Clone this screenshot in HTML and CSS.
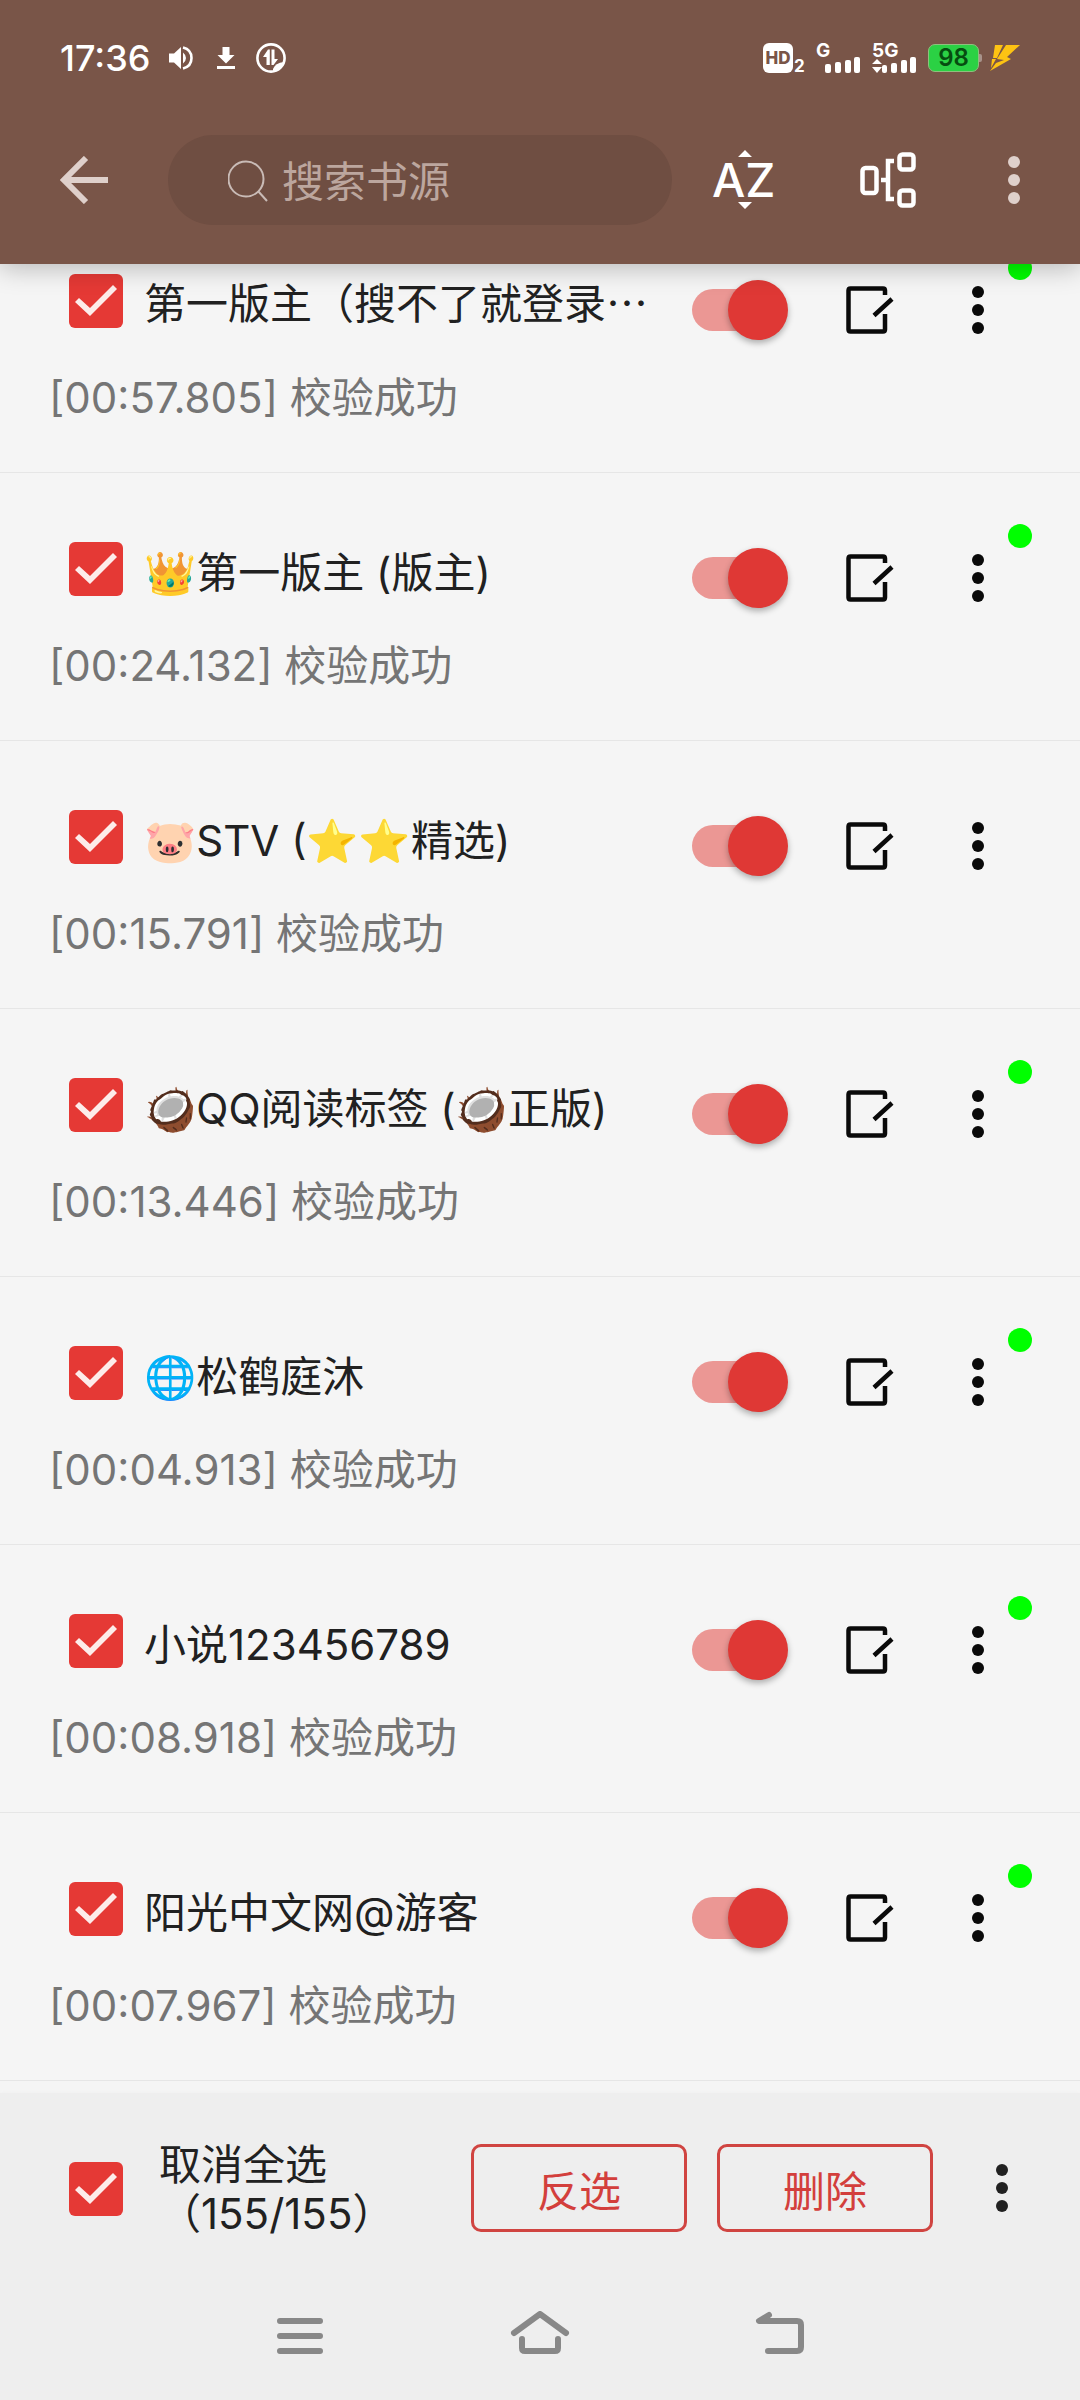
FILE: index.html
```html
<!DOCTYPE html>
<html lang="zh-CN">
<head>
<meta charset="utf-8">
<meta name="viewport" content="width=device-width, initial-scale=1">
<title>书源管理</title>
<link rel="stylesheet" href="styles.css">
</head>
<body>
<svg class="sprite" aria-hidden="true">
  <symbol id="dots" viewBox="0 0 48 48"><circle cx="24" cy="6" r="6"/><circle cx="24" cy="24" r="6"/><circle cx="24" cy="42" r="6"/></symbol>
  <symbol id="edit" viewBox="0 0 48 48"><path d="M39 9V4.500Q39 2.500 37 2.500H4.500Q2.500 2.500 2.500 4.500V43.500Q2.500 45.500 4.500 45.500H37Q39 45.500 39 43.500V28M28 29.500L46 13" fill="none" stroke="currentColor" stroke-width="4.500"/></symbol>
</svg>

<header class="top">
  <div class="status">
    <div class="status-group">
      <span class="clock">17:36</span>
      <svg class="sound" viewBox="0 0 24 24"><path d="M0 7.500H5L12 1V23L5 16.500H0ZM14 6.500Q17 9 17 12T14 17.500Z" fill="#fff"/><path d="M14 1.500C20 3 22.500 7.500 22.500 12S20 21 14 22.500" fill="none" stroke="#fff" stroke-width="2.600"/></svg>
      <svg class="download" viewBox="0 0 18 22"><path d="M5.500 0H12.500V8H17.500L9 16.500L.5 8H5.500ZM0 19H18V22H0Z" fill="#fff"/></svg>
      <svg class="data" viewBox="0 0 30 30"><circle cx="15" cy="15" r="13.600" fill="none" stroke="#fff" stroke-width="2.600"/><path d="M7 14L12 6.500H13.800V22H10.500V14ZM15.500 6.500H18.500V16H22L17.500 22H15.500Z" fill="#fff"/><path d="M17 26Q19 20 28 19Q26 27 17 28Z" fill="#fff"/></svg>
    </div>
    <div class="status-group status-right">
      <svg class="hd" viewBox="0 0 42 40"><rect y="5" width="30" height="30" rx="6" fill="#fff"/><text x="15" y="26" text-anchor="middle" font-size="17" font-weight="800" fill="#795548">HD</text><text x="31" y="34" font-size="17" font-weight="700" fill="#fff">2</text></svg>
      <svg class="signal" viewBox="0 0 45 40" fill="#fff"><text x="0" y="19" font-size="19" font-weight="700">G</text><rect x="9" y="26" width="6" height="9" rx="2"/><rect x="19" y="24" width="6" height="11" rx="2"/><rect x="29" y="22" width="6" height="13" rx="2"/><rect x="38" y="19" width="6" height="16" rx="2"/></svg>
      <svg class="signal" viewBox="0 0 45 40" fill="#fff"><text x="0" y="19" font-size="19" font-weight="700">5G</text><path d="M0 26L5 21L10 26ZM0 29H10L5 35Z"/><rect x="10" y="27" width="5" height="8" rx="2"/><rect x="19" y="25" width="6" height="10" rx="2"/><rect x="29" y="22" width="6" height="13" rx="2"/><rect x="38" y="19" width="6" height="16" rx="2"/></svg>
      <span class="battery">98</span>
      <svg class="bolt" viewBox="0 0 30 26" fill="#fdc313"><path d="M5 0H13L7 13H3ZM16 0H30L17 12L21 14L0 26L6 18L14 15L7 14ZM2 14H6L1 23Z"/></svg>
    </div>
  </div>
  <div class="toolbar">
    <button class="tool back" aria-label="返回"><svg viewBox="0 0 48 48"><path d="M26 2L4 24L26 46M4 24H48" fill="none" stroke="#dfd0cb" stroke-width="6"/></svg></button>
    <label class="search">
      <svg viewBox="0 0 40 42"><circle cx="18" cy="19" r="17.500" fill="none" stroke="#c9bbb6" stroke-width="2"/><path d="M30 31L39 41" stroke="#c9bbb6" stroke-width="2"/></svg>
      <input type="search" placeholder="搜索书源" aria-label="搜索书源">
    </label>
    <button class="tool sort" aria-label="排序"><svg viewBox="0 0 64 60" fill="#fff"><path d="M26 7L33 0L40 7ZM26 52H40L33 59Z"/><text x="0" y="47" font-size="47" font-weight="500">AZ</text></svg></button>
    <button class="tool group" aria-label="分组"><svg viewBox="0 0 56 56" fill="none" stroke="#fff" stroke-width="4.500"><rect x="2.500" y="16" width="14" height="25" rx="3"/><rect x="39.500" y="2.500" width="14" height="15" rx="3"/><rect x="39.500" y="38.500" width="14" height="15" rx="3"/><path d="M34 9H28V47H34M21 28H28"/></svg></button>
    <button class="tool more" aria-label="更多"><svg><use href="#dots"/></svg></button>
  </div>
</header>

<main class="list">
  <ul class="sources">
    <li class="source">
      <div class="info"><label class="name"><input class="check" type="checkbox" checked><span class="cjk">第一版主（搜不了就登录…</span></label><p class="result">[00:57.805] 校验成功</p></div>
      <div class="actions"><input class="switch" type="checkbox" role="switch" aria-label="启用" checked><button class="icon" aria-label="编辑"><svg><use href="#edit"/></svg></button><button class="icon" aria-label="更多"><svg><use href="#dots"/></svg></button></div>
      <span class="online"></span>
    </li>
    <li class="source">
      <div class="info"><label class="name"><input class="check" type="checkbox" checked><span>👑第一版主 (版主)</span></label><p class="result">[00:24.132] 校验成功</p></div>
      <div class="actions"><input class="switch" type="checkbox" role="switch" aria-label="启用" checked><button class="icon" aria-label="编辑"><svg><use href="#edit"/></svg></button><button class="icon" aria-label="更多"><svg><use href="#dots"/></svg></button></div>
      <span class="online"></span>
    </li>
    <li class="source">
      <div class="info"><label class="name"><input class="check" type="checkbox" checked><span>🐷STV (⭐⭐精选)</span></label><p class="result">[00:15.791] 校验成功</p></div>
      <div class="actions"><input class="switch" type="checkbox" role="switch" aria-label="启用" checked><button class="icon" aria-label="编辑"><svg><use href="#edit"/></svg></button><button class="icon" aria-label="更多"><svg><use href="#dots"/></svg></button></div>
    </li>
    <li class="source">
      <div class="info"><label class="name"><input class="check" type="checkbox" checked><span>🥥QQ阅读标签 (🥥正版)</span></label><p class="result">[00:13.446] 校验成功</p></div>
      <div class="actions"><input class="switch" type="checkbox" role="switch" aria-label="启用" checked><button class="icon" aria-label="编辑"><svg><use href="#edit"/></svg></button><button class="icon" aria-label="更多"><svg><use href="#dots"/></svg></button></div>
      <span class="online"></span>
    </li>
    <li class="source">
      <div class="info"><label class="name"><input class="check" type="checkbox" checked><span>🌐松鹤庭沐</span></label><p class="result">[00:04.913] 校验成功</p></div>
      <div class="actions"><input class="switch" type="checkbox" role="switch" aria-label="启用" checked><button class="icon" aria-label="编辑"><svg><use href="#edit"/></svg></button><button class="icon" aria-label="更多"><svg><use href="#dots"/></svg></button></div>
      <span class="online"></span>
    </li>
    <li class="source">
      <div class="info"><label class="name"><input class="check" type="checkbox" checked><span>小说123456789</span></label><p class="result">[00:08.918] 校验成功</p></div>
      <div class="actions"><input class="switch" type="checkbox" role="switch" aria-label="启用" checked><button class="icon" aria-label="编辑"><svg><use href="#edit"/></svg></button><button class="icon" aria-label="更多"><svg><use href="#dots"/></svg></button></div>
      <span class="online"></span>
    </li>
    <li class="source">
      <div class="info"><label class="name"><input class="check" type="checkbox" checked><span>阳光中文网@游客</span></label><p class="result">[00:07.967] 校验成功</p></div>
      <div class="actions"><input class="switch" type="checkbox" role="switch" aria-label="启用" checked><button class="icon" aria-label="编辑"><svg><use href="#edit"/></svg></button><button class="icon" aria-label="更多"><svg><use href="#dots"/></svg></button></div>
      <span class="online"></span>
    </li>
  </ul>
</main>

<footer class="bottom">
  <div class="selection">
    <label class="all"><input class="check" type="checkbox" checked><span>取消全选<br>（155/155）</span></label>
    <button class="outlined">反选</button>
    <button class="outlined">删除</button>
    <button class="icon dark" aria-label="更多"><svg><use href="#dots"/></svg></button>
  </div>
  <nav class="system">
    <button class="icon" aria-label="最近任务"><svg viewBox="0 0 60 48"><path d="M10 10H50M10 25H50M10 40H50"/></svg></button>
    <button class="icon" aria-label="主屏幕"><svg viewBox="0 0 60 48"><path d="M4 22L30 3L56 22M12 28V37Q12 40 15 40H45Q48 40 48 37V28"/></svg></button>
    <button class="icon" aria-label="返回"><svg viewBox="0 0 60 48"><path d="M19 4L9 10H47Q51 10 51 14V36Q51 40 47 40H18"/></svg></button>
  </nav>
</footer>
</body>
</html>
```

FILE: styles.css
```css
* { box-sizing: border-box; }

body {
  margin: 0;
  height: 100vh;
  display: flex;
  flex-direction: column;
  background: #f5f5f5;
  color: #212121;
  font-family: Inter, "Noto Sans CJK SC", "Noto Color Emoji", sans-serif;
  font-size: 42px;
}

button, input { font: inherit; }

button {
  padding: 0;
  border: 0;
  background: none;
  color: inherit;
}

svg { display: block; flex: none; }

.sprite { display: none; }

/* header */
.top {
  position: relative;
  z-index: 1;
  flex: none;
  background: #795548;
  box-shadow: 0 4px 24px rgba(0, 0, 0, .25);
  padding-bottom: 38px;
}

.status {
  display: flex;
  justify-content: space-between;
  align-items: center;
  height: 116px;
  padding: 0 60px;
  color: #fff;
}

.status-group { display: flex; align-items: center; }
.status-right { gap: 11px; }
.clock { font-size: 36px; font-weight: 500; line-height: 48px; width: 109px; }
.sound { width: 24px; height: 24px; margin-right: 24px; }
.download { width: 18px; height: 22px; margin-right: 21px; }
.data { width: 30px; height: 30px; }
.hd { width: 42px; height: 40px; }
.signal { width: 45px; height: 40px; }

.battery {
  position: relative;
  width: 51px;
  height: 28px;
  border: 1px solid #8fbf7e;
  border-radius: 7px;
  background: #2bd144;
  color: #064d10;
  font-size: 24px;
  font-weight: 600;
  line-height: 26px;
  text-align: center;
}

.battery::after {
  content: "";
  position: absolute;
  left: 50px;
  top: 9px;
  width: 3px;
  height: 8px;
  border-radius: 0 2px 2px 0;
  background: #a8938b;
}

.bolt { width: 30px; height: 26px; }

.toolbar {
  display: flex;
  align-items: center;
  height: 110px;
  padding: 18px 42px 0 60px;
}

.tool { flex: none; }
.back svg { width: 48px; height: 48px; }

.search {
  flex: 1;
  min-width: 0;
  display: flex;
  align-items: center;
  gap: 14px;
  height: 90px;
  margin: 0 40px 0 60px;
  padding: 2px 60px 0;
  border-radius: 45px;
  background: #6f4e42;
}

.search svg { width: 40px; height: 42px; }

.search input {
  flex: 1;
  min-width: 0;
  padding: 0;
  border: 0;
  outline: 0;
  background: none;
  color: #fff;
}

.search input::placeholder { color: #bca69e; opacity: 1; }
.sort svg { width: 64px; height: 60px; }
.group { margin: 0 74px 0 84px; }
.group svg { width: 56px; height: 56px; }
.more svg { width: 48px; height: 48px; fill: #dfd0cb; }

/* source list, scrolled part of a row past the header */
.list { flex: 1; min-height: 0; overflow: hidden; }

.sources {
  margin: -59px 0 0;
  padding: 0;
  list-style: none;
}

.source {
  position: relative;
  display: flex;
  height: 268px;
  padding: 0 78px 0 48px;
  border-bottom: 1px solid #e6e6e6;
}

.info { flex: 1; min-width: 0; padding-top: 66px; }

.name {
  display: flex;
  align-items: center;
  gap: 21px;
  height: 60px;
  padding-left: 21px;
  white-space: nowrap;
}

.cjk { font-family: "Noto Sans CJK SC", sans-serif; line-height: 60px; }
.result { margin: 37px 0 0; padding-left: 1px; color: #757575; line-height: 60px; }

.check {
  appearance: none;
  flex: none;
  width: 54px;
  height: 54px;
  margin: 0;
  border-radius: 6px;
  background: #e53935;
}

.check::before {
  content: "";
  display: block;
  height: 100%;
  background: #fdecea;
  clip-path: polygon(6px 28px, 10px 24px, 21px 34px, 44px 11px, 48px 15px, 21px 42px);
}

.actions {
  flex: none;
  display: flex;
  align-items: center;
  align-self: flex-start;
  height: 60px;
  margin: 75px 0 0 36px;
}

.switch {
  appearance: none;
  display: grid;
  align-items: center;
  width: 96px;
  height: 60px;
  margin: 0 58px 0 0;
}

.switch::before, .switch::after { content: ""; grid-area: 1 / 1; }

.switch::before {
  width: 84px;
  height: 42px;
  border-radius: 21px;
  background: #eb9794;
}

.switch::after {
  justify-self: end;
  width: 60px;
  height: 60px;
  border-radius: 50%;
  background: #df3835;
  box-shadow: 0 3px 6px rgba(0, 0, 0, .3);
}

.icon { flex: none; color: #0a0a0a; }
.icon svg { width: 48px; height: 48px; fill: currentColor; }
.actions .icon + .icon { margin-left: 60px; }

.online {
  position: absolute;
  top: 51px;
  right: 48px;
  width: 24px;
  height: 24px;
  border-radius: 50%;
  background: #00ff00;
}

/* bottom bars */
.bottom { flex: none; background: #eee; box-shadow: 0 0 4px #eee; }

.selection {
  display: flex;
  align-items: center;
  gap: 30px;
  height: 190px;
  padding: 0 54px 0 69px;
}

.all {
  flex: 1;
  display: flex;
  align-items: center;
  gap: 36px;
  padding-top: 2px;
  line-height: 49px;
  white-space: nowrap;
}

.outlined {
  width: 216px;
  height: 88px;
  border: 3px solid #d04441;
  border-radius: 10px;
  color: #d33f3c;
}

.dark { margin-left: 15px; color: #212121; }

.system {
  display: flex;
  justify-content: center;
  align-items: flex-start;
  gap: 180px;
  height: 117px;
  padding-top: 28px;
}

.system .icon svg {
  width: 60px;
  height: 48px;
  fill: none;
  stroke: #888;
  stroke-width: 6;
  stroke-linecap: round;
  stroke-linejoin: round;
}
```
